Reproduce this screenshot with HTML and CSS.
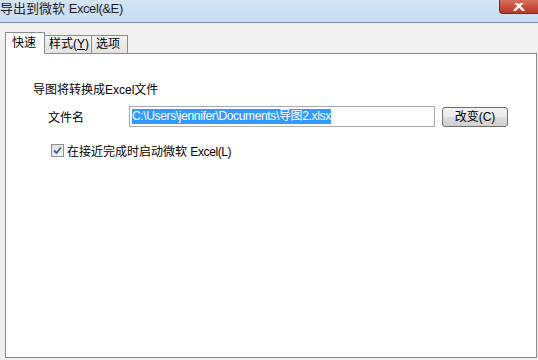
FILE: index.html
```html
<!DOCTYPE html>
<html lang="zh-CN">
<head>
<meta charset="utf-8">
<link rel="stylesheet" href="styles.css">
</head>
<body>
<div class="window">
  <div class="titlebar">
    <span class="title">导出到微软 <span class="latin">Excel(&amp;E)</span></span>
    <div class="close">
      <svg width="12" height="8" viewBox="0 0 12 8"><path d="M1 -2 L11 8 M11 -2 L1 8" stroke="#fff" stroke-width="2.4" fill="none"/></svg>
    </div>
  </div>
  <div class="body">
    <div class="tabs">
      <div class="tab active">快速</div>
      <div class="tab">样式(<u>Y</u>)</div>
      <div class="tab">选项</div>
    </div>
    <div class="panel">
      <div class="heading">导图将转换成Excel文件</div>
      <div class="filerow">
        <span class="label">文件名</span>
        <div class="input"><span class="sel">C:\Users\jennifer\Documents\导图2.xlsx</span></div>
        <div class="button">改变(C)</div>
      </div>
      <label class="check">
        <span class="box"><svg width="9" height="9" viewBox="0 0 9 9"><path d="M1 4.5 L3.5 7 L8 1.5" stroke="#3c5a9a" stroke-width="1.8" fill="none"/></svg></span>
        <span>在接近完成时启动微软 <span class="latin">Excel(L)</span></span>
      </label>
    </div>
  </div>
</div>
</body>
</html>
```

FILE: styles.css
```css
* { box-sizing: border-box; }
html, body { margin: 0; padding: 0; }
body {
  width: 538px;
  height: 360px;
  overflow: hidden;
  background: #f0f0f0;
  font-family: "Liberation Sans", "Noto Sans CJK SC", sans-serif;
  font-size: 12px;
  color: #000;
}
.window { width: 538px; height: 360px; display: flex; flex-direction: column; }
.titlebar {
  height: 23px;
  flex: none;
  display: flex;
  justify-content: space-between;
  align-items: flex-start;
  background: linear-gradient(#d5e4f5, #c8dbf1);
  border-bottom: 1px solid #7b8a9c;
}
.title {
  font-size: 13px;
  line-height: 17px;
  color: #1e1e1e;
}
.latin { letter-spacing: -0.4px; }
.close {
  width: 39px;
  height: 14px;
  background: linear-gradient(#d67060, #c44a38 60%, #b73a2a);
  border: 1px solid #6b2c24;
  border-top: none;
  border-right: none;
  border-radius: 0 0 0 4px;
  display: flex;
  justify-content: center;
  align-items: flex-end;
  padding-bottom: 2px;
}
.close svg { display: block; }
.body {
  flex: 1;
  padding: 8px 1px 2px 5px;
  display: flex;
  flex-direction: column;
}
.tabs { display: flex; align-items: flex-end; height: 22px; flex: none; position: relative; z-index: 1; }
.tab {
  height: 18px;
  padding: 0 4px;
  border: 1px solid #898c95;
  border-bottom: none;
  border-left: none;
  background: linear-gradient(#f2f2f2, #e3e3e3);
  line-height: 16px;
  font-size: 12px;
  white-space: nowrap;
}
.tab.active {
  height: 22px;
  width: 40px;
  border-left: 1px solid #898c95;
  background: #fff;
  line-height: 20px;
  padding: 0 6px;
  margin-bottom: -1px;
}
.tab:nth-child(2) { width: 47px; }
.tab:nth-child(3) { width: 36px; }
.panel {
  flex: 1;
  background: #fff;
  border: 1px solid #898c95;
  padding: 28px 0 0 27px;
}
.heading { line-height: 16px; }
.filerow {
  display: flex;
  align-items: center;
  margin-top: 8px;
  height: 21px;
}
.label { width: 96px; padding-left: 15px; }
.input {
  width: 306px;
  height: 21px;
  border: 1px solid #abadb3;
  border-top-color: #a3a6ad;
  padding: 2px 2px;
  display: flex;
  align-items: center;
}
.sel {
  background: #3399ff;
  color: #fff;
  line-height: 15px;
  white-space: nowrap;
  letter-spacing: -0.35px;
}
.button {
  margin-left: 7px;
  width: 66px;
  height: 20px;
  border: 1px solid #707070;
  border-radius: 3px;
  background: linear-gradient(#f2f2f2 0%, #ebebeb 50%, #dddddd 51%, #cfcfcf 100%);
  text-align: center;
  line-height: 18px;
}
.check {
  display: flex;
  align-items: center;
  margin-top: 15px;
  margin-left: 18px;
  gap: 3px;
}
.box {
  width: 13px;
  height: 13px;
  border: 1px solid #8e8f8f;
  background: linear-gradient(135deg, #dcdcdc, #fbfbfb);
  display: flex;
  align-items: center;
  justify-content: center;
}
.box svg { display: block; }
```
